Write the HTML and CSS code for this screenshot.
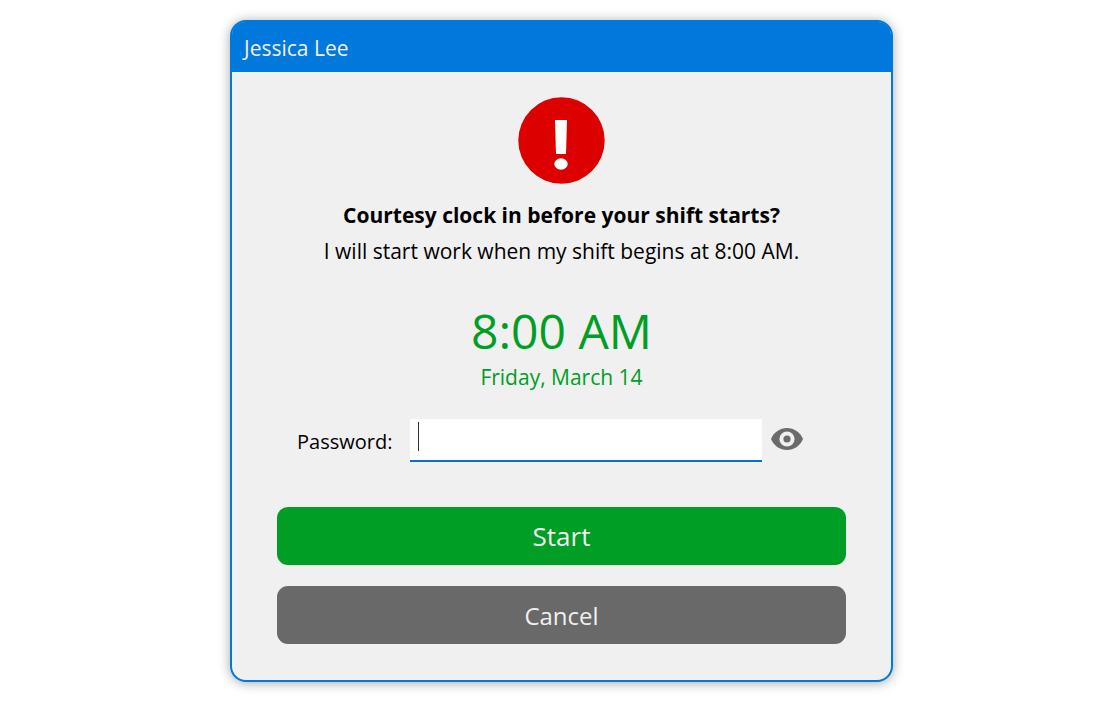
FILE: index.html
```html
<!DOCTYPE html>
<html lang="en">
<head>
    <meta charset="UTF-8">
    <meta name="viewport" content="width=device-width, initial-scale=1.0">
    <title>Clock In</title>
    <link rel="stylesheet" href="styles.css">
</head>
<body>
    <main class="dialog">
        <header class="dialog-header">Jessica Lee</header>
        <form class="dialog-body" onsubmit="return false">
            <svg class="alert-icon" viewBox="0 0 87 87" aria-hidden="true">
                <circle cx="43.5" cy="43.5" r="43.2" fill="#dd0000"/>
                <path d="M37 23H49L48 57H38Z" fill="#fff"/>
                <ellipse cx="43" cy="67" rx="6.7" ry="5.8" fill="#fff"/>
            </svg>
            <h1 class="title">Courtesy clock in before your shift starts?</h1>
            <p class="message">I will start work when my shift begins at 8:00 AM.</p>

            <div class="time">8:00 AM</div>
            <div class="date">Friday, March 14</div>

            <div class="password-row">
                <label class="password-label" for="password">Password:</label>
                <input class="password-input" type="password" id="password">
                <button class="show-password" type="button" aria-label="Show password" onclick="togglePassword()">
                    <svg class="eye-icon" viewBox="0 0 32 22" aria-hidden="true">
                        <path d="M0 11C3 4 9 0 16 0S29 4 32 11C29 18 23 22 16 22S3 18 0 11Z" fill="#6b6b6b"/>
                        <circle cx="16" cy="11" r="7.6" fill="#f0f0f0"/>
                        <circle cx="16" cy="11" r="3.6" fill="#6b6b6b"/>
                    </svg>
                </button>
            </div>

            <button class="button button-start" type="submit">Start</button>
            <button class="button button-cancel" type="button">Cancel</button>
        </form>
    </main>

    <script>
        // Switch the password between dots and plain text
        function togglePassword() {
            const input = document.getElementById('password');
            input.type = input.type === 'password' ? 'text' : 'password';
        }
    </script>
</body>
</html>
```
FILE: styles.css
```css
* {
    box-sizing: border-box;
}
body {
    margin: 0;
    padding: 20px 10px 20px 13px;
    background-color: #fff;
    color: #000;
    font-family: "Segoe UI", "Open Sans", "Noto Sans", sans-serif;
    font-size: 21px;
}
.dialog {
    max-width: 663px;
    margin: 0 auto;
    border: 2px solid #0078dc;
    border-radius: 16px;
    background-color: #f0f0f0;
    box-shadow: 0 1px 12px rgba(0, 0, 0, 0.35);
}
.dialog-header {
    padding: 2px 12px 0;
    border-radius: 13px 13px 0 0;
    background-color: #0078dc;
    color: #f0f0f0;
    line-height: 48px;
}
.dialog-body {
    display: flex;
    flex-direction: column;
    padding: 25px 45px 36px;
    text-align: center;
}
.alert-icon {
    align-self: center;
    width: 87px;
    height: 87px;
    margin-bottom: 13px;
}
.title,
.message {
    margin: 0;
    font-size: 21px;
    line-height: 36px;
}
.time {
    margin-top: 30px;
    color: #009e25;
    font-size: 48px;
    line-height: 64px;
}
.date {
    color: #009e25;
    line-height: 28px;
}
.password-row {
    display: flex;
    align-items: center;
    margin: 28px 43px 45px 20px;
}
.password-label {
    flex: 0 0 113px;
    padding-top: 2px;
    font-size: 20px;
    text-align: left;
}
.password-input {
    flex: 1;
    min-width: 0;
    height: 43px;
    padding: 0 8px;
    border: 0;
    border-bottom: 2px solid #0f6fc6;
    outline: none;
    /* text cursor at the start of the empty field */
    background: linear-gradient(#333, #333) 8px 3px / 1px 29px no-repeat #fff;
    font: inherit;
}
.password-input:focus {
    background-image: none;
}
.show-password {
    margin-left: 9px;
    padding: 0 0 4px;
    border: 0;
    background: none;
    cursor: pointer;
}
.eye-icon {
    display: block;
    width: 32px;
    height: 22px;
}
.button {
    height: 58px;
    border: none;
    border-radius: 11px;
    color: #f0f0f0;
    font-family: inherit;
    font-size: 26px;
    cursor: pointer;
}
.button-start {
    margin-bottom: 21px;
    background-color: #009e25;
}
.button-cancel {
    background-color: #696969;
    font-size: 24px;
}
```
